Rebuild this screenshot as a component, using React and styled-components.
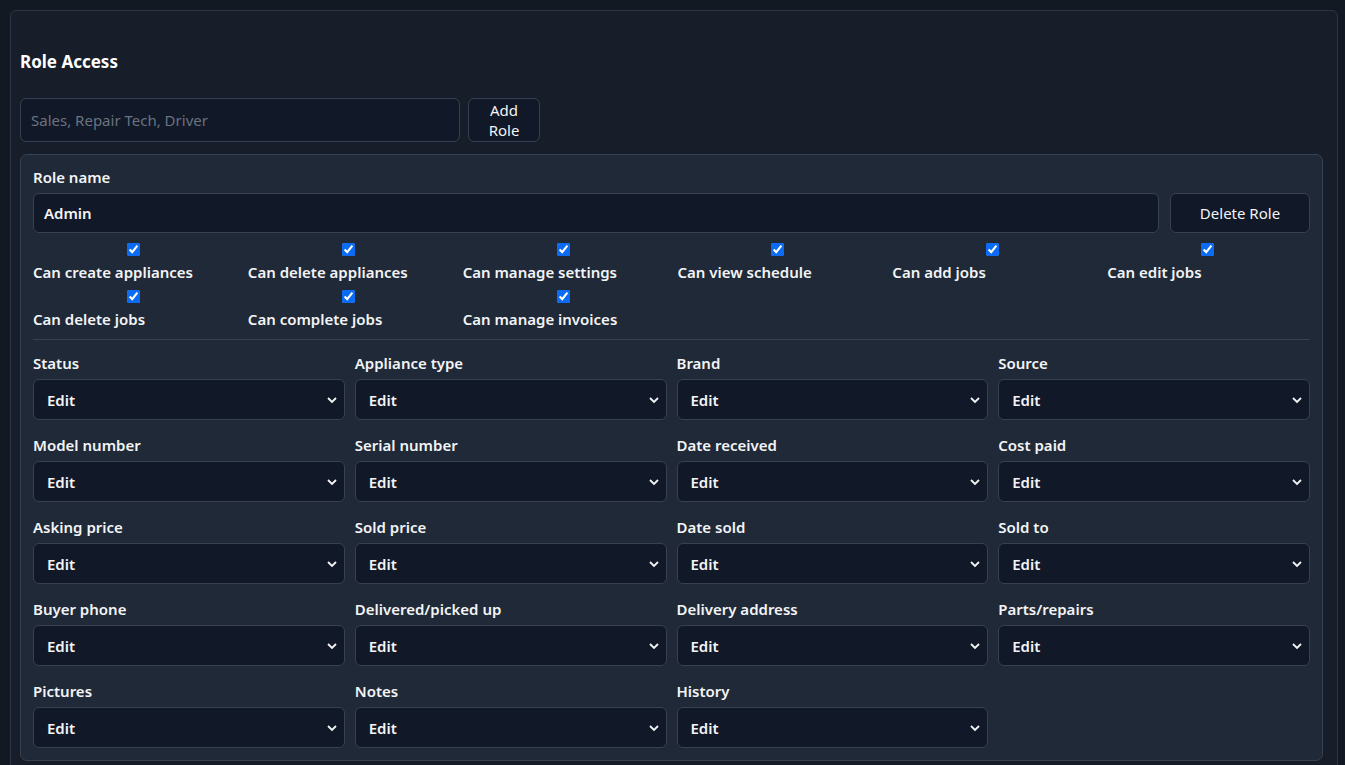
import React from "react";
import styled, { createGlobalStyle } from "styled-components";

const Global = createGlobalStyle`
  html, body { margin: 0; background: #131922; }
  body { font-family: "Segoe UI", "Noto Sans", "Open Sans", sans-serif; color: #f3f4f6; }
  * { box-sizing: border-box; }
`;

const Page = styled.div`padding: 10px 7px 0 10px; height: 765px; overflow: hidden;`;
const Card = styled.div`
  background: #171e29; border: 1px solid #2c3543; border-radius: 6px;
  padding: 36px 14px 20px 9px; min-height: 800px;
`;
const Title = styled.h2`margin: 0 0 21px; font-size: 17px; font-weight: 700; line-height: 30px; color: #fff;`;
const AddRow = styled.div`display: flex; gap: 8px; margin-bottom: 12px;`;
const TextInput = styled.input`
  width: ${p => p.$w || "100%"}; height: ${p => p.$h || 40}px; background: #111827;
  border: 1px solid #374151; border-radius: 6px; color: #f3f4f6; font: inherit;
  font-size: 15px; font-weight: ${p => p.$bold ? 600 : 400}; padding: 0 10px; outline: none;
  &::placeholder { color: #6b7280; }
`;
const Button = styled.button`
  background: #111827; border: 1px solid #374151; border-radius: 6px; color: #f3f4f6;
  font: inherit; font-size: 15px; line-height: 20px; padding: 0 12px; height: ${p => p.$h}px;
  width: ${p => p.$w}px; flex-shrink: 0;
`;
const Panel = styled.div`
  background: #1f2937; border: 1px solid #364152; border-radius: 7px; padding: 12px 12px 12px 12px;
`;
const Label = styled.div`font-size: 15px; font-weight: 600; line-height: 20px; margin-bottom: 6px; color: #f3f4f6;`;
const NameRow = styled.div`display: flex; gap: 11px; margin-bottom: 10px;`;
const PermGrid = styled.div`display: grid; grid-template-columns: repeat(6, 1fr); column-gap: 12px; row-gap: 8px;`;
const Perm = styled.label`display: flex; flex-direction: column; font-size: 15px; font-weight: 600; line-height: 20px;`;
const Check = styled.input`
  margin: 0 0 6px 94px; width: 13px; height: 13px; accent-color: #0b6bf4;
`;
const Divider = styled.hr`border: 0; border-top: 1px solid #374151; margin: 10px 0 13px;`;
const FieldGrid = styled.div`display: grid; grid-template-columns: repeat(4, 1fr); column-gap: 10px; row-gap: 15px;`;
const SelectWrap = styled.div`position: relative;`;
const Select = styled.select`
  appearance: none; width: 100%; height: 41px; background: #111827; border: 1px solid #374151;
  border-radius: 6px; color: #f3f4f6; font: inherit; font-size: 15px; font-weight: 600; padding: 0 13px;
`;
const Chevron = styled.svg`position: absolute; right: 7px; top: 15px; pointer-events: none;`;

const perms = ["Can create appliances","Can delete appliances","Can manage settings","Can view schedule","Can add jobs","Can edit jobs","Can delete jobs","Can complete jobs","Can manage invoices"];
const fields = ["Status","Appliance type","Brand","Source","Model number","Serial number","Date received","Cost paid","Asking price","Sold price","Date sold","Sold to","Buyer phone","Delivered/picked up","Delivery address","Parts/repairs","Pictures","Notes","History"];

export default function App() {
  return (
    <Page>
      <Global />
      <Card>
        <Title>Role Access</Title>
        <AddRow>
          <TextInput $w="440px" $h={44} placeholder="Sales, Repair Tech, Driver" />
          <Button $w={72} $h={44}>Add<br />Role</Button>
        </AddRow>
        <Panel>
          <Label>Role name</Label>
          <NameRow>
            <TextInput $bold defaultValue="Admin" />
            <Button $w={140} $h={40}>Delete Role</Button>
          </NameRow>
          <PermGrid>
            {perms.map(p => (
              <Perm key={p}><Check type="checkbox" defaultChecked />{p}</Perm>
            ))}
          </PermGrid>
          <Divider />
          <FieldGrid>
            {fields.map(f => (
              <div key={f}>
                <Label>{f}</Label>
                <SelectWrap>
                  <Select defaultValue="Edit"><option>Edit</option><option>View</option><option>None</option></Select>
                  <Chevron width="12" height="12" viewBox="0 0 12 12"><path d="M2 4l4 4 4-4" fill="none" stroke="#f3f4f6" strokeWidth="1.8" /></Chevron>
                </SelectWrap>
              </div>
            ))}
          </FieldGrid>
        </Panel>
      </Card>
    </Page>
  );
}
